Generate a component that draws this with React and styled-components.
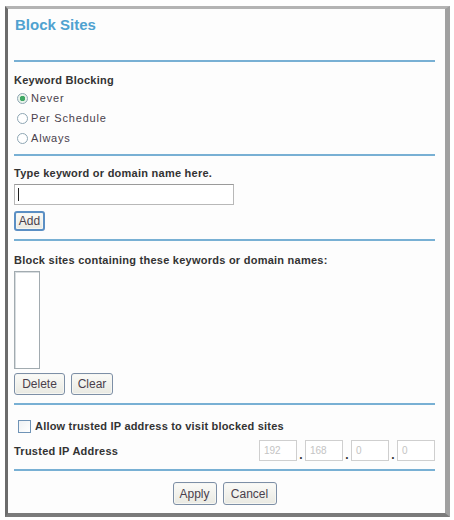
import React from "react";
import styled, { createGlobalStyle } from "styled-components";

const Global = createGlobalStyle`
  html, body { margin: 0; padding: 0; background: #ffffff; }
  body { font-family: "Liberation Sans", Arial, sans-serif; color: #333; }
  * { box-sizing: border-box; }
`;

const Frame = styled.div`
  margin: 6px 0 0 5px;
  width: 445px;
  height: 511px;
  border-left: 3px solid #6c6c6c;
  border-top: 3px solid #b4b4b4;
  border-right: 5px solid #a0a0a0;
  border-bottom: 4px solid #7a7a7a;
  background: #fdfdfd;
  padding: 6px 10px 0 6px;
  display: flex;
  flex-direction: column;
`;

const Title = styled.h1`
  margin: 0;
  height: 20px;
  line-height: 20px;
  font-size: 15px;
  font-weight: bold;
  color: #4fa2d0;
  padding-left: 1px;
`;

const Rule = styled.div`
  margin-top: ${(p) => p.$mt}px;
  height: 2px;
  background: #78b0d4;
  flex: none;
`;

const Label = styled.div`
  margin-top: ${(p) => p.$mt}px;
  height: 14px;
  line-height: 14px;
  font-size: 11px;
  font-weight: bold;
  letter-spacing: 0.25px;
  color: #333;
  white-space: nowrap;
`;

const RadioGroup = styled.div`
  margin-top: 1px;
  display: flex;
  flex-direction: column;
`;

const RadioRow = styled.label`
  height: 20px;
  display: flex;
  align-items: center;
  padding-left: 3px;
  gap: 3px;
  font-size: 11px;
  letter-spacing: 0.8px;
  color: #4a3f4c;
`;

const RadioDot = styled.span`
  width: 11px;
  height: 11px;
  border-radius: 50%;
  border: 1px solid #8ea6b4;
  background: ${(p) => (p.$on ? "radial-gradient(circle, #3fa865 0 2.5px, #e8f3ea 3px)" : "#ffffff")};
  flex: none;
`;

const TextInputWrap = styled.div`
  margin-top: 4px;
  width: 220px;
  height: 21px;
  border: 1px solid #b8b8b8;
  border-top-color: #9a9a9a;
  background: #fff;
  position: relative;
`;

const Caret = styled.span`
  position: absolute;
  left: 3px;
  top: 3px;
  width: 1px;
  height: 13px;
  background: #222;
`;

const Button = styled.button`
  margin: 0;
  width: ${(p) => p.$w}px;
  height: ${(p) => p.$h}px;
  padding: 0;
  font-family: "Liberation Sans", Arial, sans-serif;
  font-size: 12px;
  color: #4a3f4c;
  background: linear-gradient(#fbfbf8, #e9e9e2);
  border: ${(p) => (p.$focus ? "2px solid #5b8fc4" : "1px solid #7d8fa6")};
  border-radius: 3px;
  box-shadow: inset 0 0 0 1px #f6f6f2;
`;

const ButtonRow = styled.div`
  margin-top: ${(p) => p.$mt}px;
  display: flex;
  gap: 6px;
  justify-content: ${(p) => (p.$center ? "center" : "flex-start")};
`;

const ListBox = styled.div`
  margin-top: 4px;
  width: 26px;
  height: 98px;
  border: 1px solid #a2abb0;
  box-shadow: inset 1px 1px 0 #d8dde0;
  background: #fff;
`;

const CheckRow = styled.label`
  margin-top: 13px;
  height: 16px;
  display: flex;
  align-items: center;
  gap: 4px;
  padding-left: 4px;
  font-size: 11px;
  font-weight: bold;
  letter-spacing: 0.2px;
  color: #333;
`;

const CheckBox = styled.span`
  width: 13px;
  height: 13px;
  border: 1px solid #6f93b6;
  background: linear-gradient(135deg, #eef1f4, #ffffff);
  flex: none;
`;

const IpRow = styled.div`
  margin-top: 6px;
  height: 21px;
  display: flex;
  align-items: center;
  justify-content: space-between;
`;

const IpFields = styled.div`
  display: flex;
  align-items: flex-end;
  height: 21px;
`;

const IpBox = styled.div`
  width: 38px;
  height: 21px;
  border: 1px solid #cfcfcf;
  color: #c4c4c4;
  font-size: 10px;
  line-height: 19px;
  padding-left: 4px;
  background: #fff;
`;

const Dot = styled.span`
  width: 8px;
  text-align: center;
  font-size: 12px;
  font-weight: bold;
  line-height: 12px;
  color: #333;
`;

export default function App() {
  return (
    <>
      <Global />
      <Frame>
        <Title>Block Sites</Title>
        <Rule $mt={25} />
        <Label $mt={11}>Keyword Blocking</Label>
        <RadioGroup>
          <RadioRow><RadioDot $on />Never</RadioRow>
          <RadioRow><RadioDot />Per Schedule</RadioRow>
          <RadioRow><RadioDot />Always</RadioRow>
        </RadioGroup>
        <Rule $mt={6} />
        <Label $mt={10}>Type keyword or domain name here.</Label>
        <TextInputWrap><Caret /></TextInputWrap>
        <ButtonRow $mt={6}>
          <Button $w={31} $h={20} $focus>Add</Button>
        </ButtonRow>
        <Rule $mt={8} />
        <Label $mt={12}>Block sites containing these keywords or domain names:</Label>
        <ListBox />
        <ButtonRow $mt={4}>
          <Button $w={51} $h={22}>Delete</Button>
          <Button $w={42} $h={22}>Clear</Button>
        </ButtonRow>
        <Rule $mt={8} />
        <CheckRow><CheckBox />Allow trusted IP address to visit blocked sites</CheckRow>
        <IpRow>
          <Label $mt={0}>Trusted IP Address</Label>
          <IpFields>
            <IpBox>192</IpBox><Dot>.</Dot>
            <IpBox>168</IpBox><Dot>.</Dot>
            <IpBox>0</IpBox><Dot>.</Dot>
            <IpBox>0</IpBox>
          </IpFields>
        </IpRow>
        <Rule $mt={8} />
        <ButtonRow $mt={11} $center>
          <Button $w={44} $h={23}>Apply</Button>
          <Button $w={54} $h={23}>Cancel</Button>
        </ButtonRow>
      </Frame>
    </>
  );
}
